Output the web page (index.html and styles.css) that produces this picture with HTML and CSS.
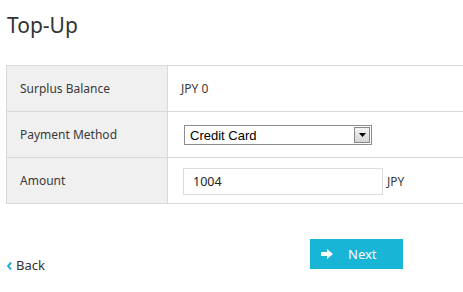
FILE: index.html
```html
<!DOCTYPE html>
<html>
<head>
<meta charset="utf-8">
<link rel="stylesheet" href="styles.css">
</head>
<body>
<div class="page">
  <h1 class="title">Top-Up</h1>
  <table class="form">
    <tr>
      <th>Surplus Balance</th>
      <td>JPY 0</td>
    </tr>
    <tr>
      <th>Payment Method</th>
      <td>
        <div class="select">
          <span class="select-text">Credit Card</span>
          <span class="select-btn"><svg width="7" height="4" viewBox="0 0 7 4"><path d="M0 0h7L3.5 4z" fill="#000"/></svg></span>
        </div>
      </td>
    </tr>
    <tr>
      <th>Amount</th>
      <td><div class="amount"><span class="input">1004</span><span class="unit">JPY</span></div></td>
    </tr>
  </table>
  <div class="footer">
    <a class="back"><svg class="chev" width="5" height="8" viewBox="0 0 5 8"><path d="M4 0.5L1 4l3 3.5" fill="none" stroke="#1ab3d5" stroke-width="2"/></svg>Back</a>
    <a class="next"><svg class="arrow" width="13" height="10" viewBox="0 0 13 10"><path d="M0 3h6V0l6 5-6 5V7H0z" fill="#fff"/></svg>Next</a>
  </div>
</div>
</body>
</html>
```
FILE: styles.css
```css
html, body {
  margin: 0;
  padding: 0;
  background: #fff;
}
.page {
  padding-left: 6px;
  font-family: "Noto Sans", "DejaVu Sans", sans-serif;
  color: #333;
}
.title {
  margin: 0;
  padding-top: 10px;
  height: 65px;
  box-sizing: border-box;
  font-size: 21px;
  font-weight: normal;
  line-height: 30px;
  padding-left: 1px;
  color: #333;
}
.form {
  border-collapse: collapse;
  width: 100%;
  font-size: 12px;
  color: #3a3a3a;
}
.form th, .form td {
  border-top: 1px solid #d9d9d9;
  border-bottom: 1px solid #d9d9d9;
  height: 45px;
  padding: 0;
  text-align: left;
  font-weight: normal;
}
.form th {
  width: 147px;
  padding-left: 13px;
  background: #f0f0f0;
  border-left: 1px solid #d9d9d9;
  border-right: 1px solid #d9d9d9;
}
.form td {
  padding-left: 13px;
}
.select {
  display: flex;
  width: 188px;
  height: 20px;
  box-sizing: border-box;
  border: 1px solid #8d8d8d;
  margin-left: 3px;
  margin-top: 1px;
  background: #fff;
  font-family: "Liberation Sans", Arial, sans-serif;
  font-size: 13px;
  color: #000;
  align-items: center;
}
.select-text {
  flex: 1;
  padding-left: 5px;
}
.select-btn {
  width: 16px;
  height: 16px;
  margin-right: 1px;
  box-sizing: border-box;
  border: 1px solid #888;
  background: linear-gradient(#f4f4f4, #d4d4d4);
  display: flex;
  align-items: center;
  justify-content: center;
}
.amount {
  display: flex;
  align-items: center;
  margin-left: 2px;
  margin-top: 1px;
}
.input {
  width: 200px;
  height: 27px;
  box-sizing: border-box;
  border: 1px solid #dcdcdc;
  padding-left: 9px;
  line-height: 25px;
  font-size: 12.5px;
  color: #222;
}
.unit {
  margin-left: 4px;
}
.footer {
  display: flex;
  align-items: flex-start;
  padding-top: 35px;
}
.back {
  display: flex;
  align-items: center;
  margin-top: 17px;
  margin-left: 1px;
  font-size: 13px;
  color: #333;
}
.chev {
  margin-right: 4px;
  margin-top: 1px;
}
.next {
  margin-left: auto;
  margin-right: 60px;
  width: 93px;
  height: 30px;
  background: #19b5d7;
  color: #fff;
  font-size: 13px;
  display: flex;
  align-items: center;
  box-sizing: border-box;
  padding-left: 11px;
}
.arrow {
  margin-right: 14px;
}
```
